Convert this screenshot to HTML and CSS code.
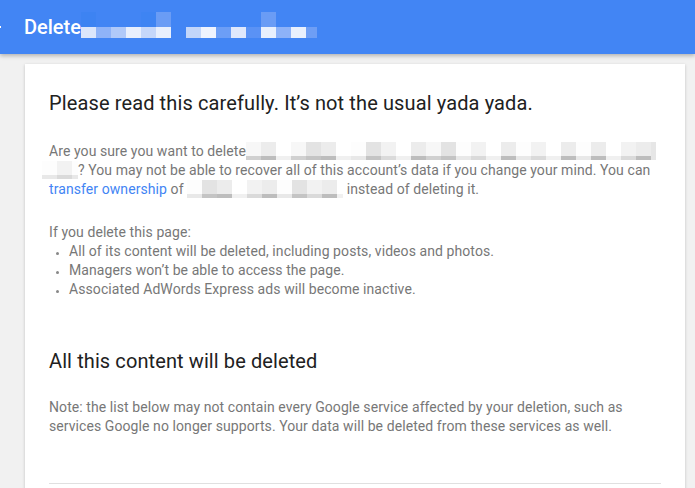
FILE: index.html
```html
<!DOCTYPE html>
<html>
<head>
<meta charset="utf-8">
<link rel="stylesheet" href="styles.css">
</head>
<body>
<header class="appbar">
  <svg class="back" width="24" height="24" viewBox="0 0 24 24"><path fill="#fff" d="M20 11H7.83l5.59-5.59L12 4l-8 8 8 8 1.41-1.41L7.83 13H20v-2z"/></svg>
  <span class="title">Delete</span>
  <span class="hrd">
    <i class="hp h1"></i><i class="hp h2"></i><i class="hp h3"></i><i class="hp h4"></i><i class="hp h5"></i><i class="hp h6"></i>
  </span>
  <span class="hrd gap">
    <i class="hp k1"></i><i class="hp k2"></i><i class="hp k3"></i><i class="hp k4"></i><i class="hp k5"></i><i class="hp k6"></i><i class="hp k7"></i><i class="hp k8"></i><i class="hp k9 narrow"></i>
  </span>
</header>
<main class="card">
  <h1 class="heading">Please read this carefully. It’s not the usual yada yada.</h1>
  <p class="text">Are you sure you want to delete<span class="rd"><i class="p a"></i><i class="p b"></i><i class="p e"></i><i class="p a"></i><i class="p d"></i><i class="p b"></i><i class="p e"></i><i class="p c"></i><i class="p d"></i><i class="p f"></i><i class="p e"></i><i class="p b"></i><i class="p a"></i><i class="p d"></i><i class="p c"></i><i class="p f"></i><i class="p e"></i><i class="p b"></i><i class="p c"></i><i class="p f"></i><i class="p e"></i><i class="p b"></i><i class="p c"></i><i class="p b"></i><i class="p e"></i><i class="p f"></i><i class="p b"></i><i class="p thin"></i></span><br><span class="rd lead"><i class="p c"></i><i class="p f"></i><i class="p c small"></i></span>? You may not be able to recover all of this account’s data if you change your mind. You can <a class="link" href="#">transfer ownership</a> of <span class="rd"><i class="p c"></i><i class="p d"></i><i class="p b"></i><i class="p e"></i><i class="p f"></i><i class="p b"></i><i class="p c"></i><i class="p d"></i><i class="p f"></i><i class="p b"></i><i class="p e small"></i></span> instead of deleting it.</p>
  <p class="text intro">If you delete this page:</p>
  <ul class="list">
    <li>All of its content will be deleted, including posts, videos and photos.</li>
    <li>Managers won’t be able to access the page.</li>
    <li>Associated AdWords Express ads will become inactive.</li>
  </ul>
  <h2 class="heading sub">All this content will be deleted</h2>
  <p class="text">Note: the list below may not contain every Google service affected by your deletion, such as services Google no longer supports. Your data will be deleted from these services as well.</p>
  <hr class="divider">
</main>
</body>
</html>
```
FILE: styles.css
```css
html, body { margin: 0; }
body {
  background: #f1f1f1;
  font-family: Roboto, "Liberation Sans", sans-serif;
  overflow: hidden;
}
.appbar {
  height: 54px;
  background: #4285f4;
  box-shadow: 0 2px 4px rgba(0,0,0,.25);
  display: flex;
  align-items: center;
  color: #fff;
  position: relative;
  z-index: 1;
}
.back { margin-left: -19px; margin-right: 19px; flex: none; }
.title { font-size: 20px; font-weight: 500; line-height: 24px; }
.hrd { display: flex; margin-bottom: 4px; }
.hrd.gap { margin-left: 15px; }
.hp {
  display: block; width: 15px; height: 26px;
  background: linear-gradient(var(--t) 0 15px, var(--b) 15px);
  --t: #4285f4;
}
.hp.narrow { width: 11px; }
.h1 { --t: #3d83f2; --b: #dce6fb; }
.h2 { --b: #8fb3f8; }
.h3 { --b: #b0c9f9; }
.h4 { --b: #e8effd; }
.h5 { --t: #3e84f3; --b: #c5d7fa; }
.h6 { --t: #6a9cf5; --b: #e8effd; }
.k1 { --b: #c2d6fa; }
.k2 { --b: #eef3fe; }
.k3 { --b: #6c9ef6; }
.k4 { --b: #dfe8fc; }
.k5 { --b: #5a92f5; }
.k6 { --t: #6a9cf5; --b: #e9f0fd; }
.k7 { --b: #8db2f8; }
.k8 { --b: #e9f0fd; }
.k9 { --b: #6e9ef5; }

.card {
  margin: 10px 10px 0 25px;
  background: #fff;
  box-shadow: 0 1px 3px rgba(0,0,0,.2);
  padding: 25px 24px 1px;
  min-height: 500px;
}
.heading {
  font-size: 20px; font-weight: 400; line-height: 28px;
  color: #212121; margin: 0 0 25px; letter-spacing: 0.12px;
}
.heading.sub { margin-top: 48px; margin-bottom: 23px; letter-spacing: 0.1px; }
.text {
  font-size: 14px; line-height: 19px; color: #777777; margin: 0 0 24px;
  letter-spacing: 0.08px;
}
.text.intro { margin: 0; }
.link { color: #4285f4; text-decoration: none; }
.list {
  margin: 0; padding-left: 20px;
  font-size: 14px; line-height: 19px; color: #777777; letter-spacing: 0.08px;
}
.list li::marker { font-size: 11px; color: #888; }
.rd { display: inline-flex; vertical-align: -4px; height: 18px; }
.rd.lead { margin-left: -7px; }
.p {
  display: block; width: 15px; height: 18px;
  background: linear-gradient(var(--t) 0 14px, var(--b) 14px);
}
.p.thin { width: 5px; --t: #e6e6e6; --b: #e6e6e6; }
.p.small { width: 6px; }
.a { --t: #f7f7f7; --b: #d0d0d0; }
.b { --t: #ececec; --b: #bdbdbd; }
.c { --t: #fdfdfd; --b: #e8e8e8; }
.d { --t: #e3e3e3; --b: #c4c4c4; }
.e { --t: #ffffff; --b: #f0f0f0; }
.f { --t: #f2f2f2; --b: #dadada; }
.divider {
  border: 0; border-top: 1px solid #e0e0e0; margin: 47px 0 0;
}
```
